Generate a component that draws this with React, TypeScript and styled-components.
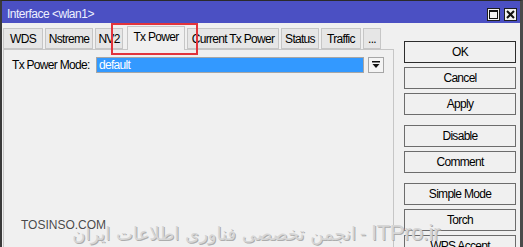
import React from "react";
import styled, { createGlobalStyle } from "styled-components";

const Global = createGlobalStyle`
  html, body { margin: 0; padding: 0; width: 523px; height: 247px; overflow: hidden; background: #f0f0f0; }
  #root { width: 523px; height: 247px; }
`;

const Window = styled.div`
  position: relative;
  width: 523px;
  height: 247px;
  box-sizing: border-box;
  border-left: 2px solid #3a3a3a;
  border-right: 3px solid #4a4a4a;
  border-top: 1px solid #2a2a2a;
  background: #f0f0f0;
  display: flex;
  flex-direction: column;
  font-family: "Liberation Sans", Arial, sans-serif;
  font-size: 12px;
  letter-spacing: -0.7px;
  color: #000;
  overflow: hidden;
`;

const TitleBar = styled.div`
  height: 22px;
  flex: none;
  background: #4b50c3;
  display: flex;
  align-items: flex-end;
  padding: 0 3px 2px 5px;
  box-sizing: border-box;
`;

const TitleText = styled.div`
  flex: 1;
  color: #eef0ff;
  font-size: 12px;
  line-height: 14px;
  letter-spacing: -0.5px;
`;

const TitleButton = styled.div`
  width: 13px;
  height: 13px;
  box-sizing: border-box;
  margin-left: 4px;
  background: #f2f2f2;
  border: 1px solid #1e1e1e;
  display: flex;
  align-items: center;
  justify-content: center;
`;

const Body = styled.div`
  flex: 1;
  display: flex;
  padding: 0 4px 0 1px;
  min-height: 0;
`;

const LeftCol = styled.div`
  width: 391px;
  flex: none;
  display: flex;
  flex-direction: column;
`;

const TabsRow = styled.div`
  height: 23px;
  margin-top: 3px;
  display: flex;
  align-items: flex-end;
  position: relative;
  z-index: 1;
`;

const Tab = styled.div<{ $w: number; $active?: boolean; $ml?: number }>`
  width: ${(p) => p.$w}px;
  height: ${(p) => (p.$active ? 24 : 21)}px;
  margin-left: ${(p) => p.$ml ?? 0}px;
  margin-right: 2px;
  margin-bottom: ${(p) => (p.$active ? -1 : 0)}px;
  box-sizing: border-box;
  border: 1px solid #c6c6c6;
  border-bottom: ${(p) => (p.$active ? "none" : "1px solid #c6c6c6")};
  background: ${(p) => (p.$active ? "#f0f0f0" : "#e6e6e6")};
  display: flex;
  align-items: ${(p) => (p.$active ? "flex-start" : "center")};
  padding-top: ${(p) => (p.$active ? 3 : 0)}px;
  justify-content: center;
  white-space: nowrap;
  overflow: hidden;
`;

const Panel = styled.div`
  flex: 1;
  border: 1px solid #c6c6c6;
  border-bottom: none;
  padding: 7px 9px 0 8px;
  background: #f0f0f0;
`;

const FieldRow = styled.div`
  display: flex;
  align-items: center;
  height: 16px;
`;

const Label = styled.div`
  width: 84px;
  flex: none;
`;

const Field = styled.div`
  width: 268px;
  height: 16px;
  box-sizing: border-box;
  border: 1px solid #a6a6a6;
  background: #3399ff;
  color: #fff;
  padding-left: 2px;
  line-height: 14px;
`;

const DropButton = styled.div`
  width: 16px;
  height: 16px;
  margin-left: 4px;
  box-sizing: border-box;
  border: 1px solid #a6a6a6;
  background: #f4f4f4;
  display: flex;
  align-items: center;
  justify-content: center;
`;

const RightCol = styled.div`
  width: 112px;
  flex: none;
  margin-left: 10px;
  padding-top: 18px;
  display: flex;
  flex-direction: column;
`;

const Button = styled.div<{ $gap: number; $default?: boolean }>`
  height: 22px;
  flex: none;
  box-sizing: border-box;
  margin-top: ${(p) => p.$gap}px;
  border: 1px solid ${(p) => (p.$default ? "#2c2c2c" : "#6c6c6c")};
  background: #f0f0f0;
  display: flex;
  align-items: center;
  justify-content: center;
`;

const Highlight = styled.div`
  position: absolute;
  left: 109px;
  top: 22px;
  width: 87px;
  height: 32px;
  box-sizing: border-box;
  border: 2px solid #e2343c;
  pointer-events: none;
  z-index: 5;
`;

const SiteMark = styled.div`
  position: absolute;
  left: 19px;
  top: 217px;
  font-family: "Liberation Sans", Arial, sans-serif;
  font-size: 12px;
  letter-spacing: 0;
  color: #4a4a4a;
  text-shadow: 0 0 1px #fff;
  z-index: 7;
`;

const ForumMark = styled.div`
  position: absolute;
  right: 80px;
  top: 219px;
  white-space: nowrap;
  color: #d6d6d6;
  text-shadow: 1px 1px 0 #adadad;
  letter-spacing: 0;
  z-index: 6;
  display: flex;
  align-items: baseline;
`;

const Latin = styled.span`
  font-family: "Liberation Sans", Arial, sans-serif;
  font-size: 22px;
  letter-spacing: -0.4px;
`;

const Dash = styled.span`
  font-family: "Liberation Sans", Arial, sans-serif;
  font-size: 18px;
  margin: 0 5px 0 4px;
`;

const Persian = styled.span`
  font-family: "DejaVu Sans", "Noto Sans", sans-serif;
  font-size: 18px;
  direction: rtl;
  unicode-bidi: isolate;
`;

const tabs: { label: string; w: number; active?: boolean; ml?: number }[] = [
  { label: "WDS", w: 40 },
  { label: "Nstreme", w: 48 },
  { label: "NV2", w: 28 },
  { label: "Tx Power", w: 58, active: true, ml: 2 },
  { label: "Current Tx Power", w: 92 },
  { label: "Status", w: 38 },
  { label: "Traffic", w: 40 },
  { label: "...", w: 18 },
];

const buttons: { label: string; gap: number; def?: boolean }[] = [
  { label: "OK", gap: 0, def: true },
  { label: "Cancel", gap: 4 },
  { label: "Apply", gap: 4 },
  { label: "Disable", gap: 10 },
  { label: "Comment", gap: 4 },
  { label: "Simple Mode", gap: 10 },
  { label: "Torch", gap: 4 },
  { label: "WPS Accept", gap: 4 },
];

export default function App() {
  return (
    <>
      <Global />
      <Window>
        <TitleBar>
          <TitleText>Interface &lt;wlan1&gt;</TitleText>
          <TitleButton>
            <svg width="9" height="9" viewBox="0 0 9 9">
              <rect x="0.5" y="0.5" width="8" height="8" fill="none" stroke="#111" strokeWidth="1" />
              <rect x="0" y="0" width="9" height="2" fill="#111" />
            </svg>
          </TitleButton>
          <TitleButton>
            <svg width="9" height="9" viewBox="0 0 9 9">
              <path d="M1 1 L8 8 M8 1 L1 8" stroke="#111" strokeWidth="2" />
            </svg>
          </TitleButton>
        </TitleBar>
        <Body>
          <LeftCol>
            <TabsRow>
              {tabs.map((t) => (
                <Tab key={t.label} $w={t.w} $active={t.active} $ml={t.ml}>
                  {t.label}
                </Tab>
              ))}
            </TabsRow>
            <Panel>
              <FieldRow>
                <Label>Tx Power Mode:</Label>
                <Field>default</Field>
                <DropButton>
                  <svg width="8" height="8" viewBox="0 0 8 8">
                    <rect x="0" y="0" width="8" height="1.5" fill="#111" />
                    <path d="M0.5 3 L7.5 3 L4 7 Z" fill="#111" />
                  </svg>
                </DropButton>
              </FieldRow>
            </Panel>
          </LeftCol>
          <RightCol>
            {buttons.map((b) => (
              <Button key={b.label} $gap={b.gap} $default={b.def}>
                {b.label}
              </Button>
            ))}
          </RightCol>
        </Body>
        <Highlight />
        <SiteMark>TOSINSO.COM</SiteMark>
        <ForumMark>
          <Persian>انجمن تخصصی فناوری اطلاعات ایران</Persian>
          <Dash>-</Dash>
          <Latin>ITPro.ir</Latin>
        </ForumMark>
      </Window>
    </>
  );
}
